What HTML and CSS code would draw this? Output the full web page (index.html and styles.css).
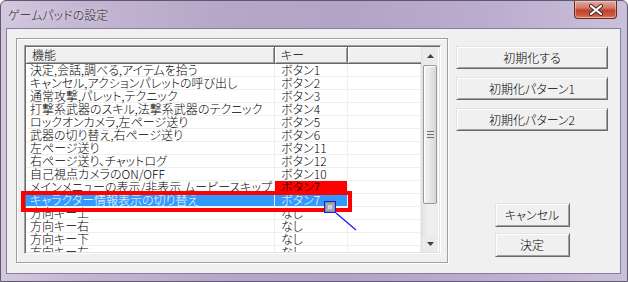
FILE: index.html
```html
<!DOCTYPE html>
<html lang="ja">
<head>
<meta charset="utf-8">
<title>ゲームパッドの設定</title>
<link rel="stylesheet" href="styles.css">
</head>
<body>
<div class="window">
  <div class="titlebar">
    <span class="title">ゲームパッドの設定</span>
    <div class="close">
      <svg width="16" height="12" viewBox="0 0 16 12"><path d="M3 2 L13 10 M13 2 L3 10" stroke="#3a2a2a" stroke-width="4" stroke-linecap="round"/><path d="M3 2 L13 10 M13 2 L3 10" stroke="#ffffff" stroke-width="2.2" stroke-linecap="round"/></svg>
    </div>
  </div>
  <div class="client">
    <div class="group">
      <div class="list">
        <div class="table">
          <div class="row head">
            <div class="hcell c1">機能</div>
            <div class="hcell c2">キー</div>
            <div class="hcell c3"></div>
          </div>
          <div class="row"><div class="cell c1">決定,会話,調べる,アイテムを拾う</div><div class="cell c2">ボタン1</div><div class="cell c3"></div></div>
          <div class="row"><div class="cell c1">キャンセル,アクションパレットの呼び出し</div><div class="cell c2">ボタン2</div><div class="cell c3"></div></div>
          <div class="row"><div class="cell c1">通常攻撃,パレット,テクニック</div><div class="cell c2">ボタン3</div><div class="cell c3"></div></div>
          <div class="row"><div class="cell c1">打撃系武器のスキル,法撃系武器のテクニック</div><div class="cell c2">ボタン4</div><div class="cell c3"></div></div>
          <div class="row"><div class="cell c1">ロックオンカメラ,左ページ送り</div><div class="cell c2">ボタン5</div><div class="cell c3"></div></div>
          <div class="row"><div class="cell c1">武器の切り替え,右ページ送り</div><div class="cell c2">ボタン6</div><div class="cell c3"></div></div>
          <div class="row"><div class="cell c1">左ページ送り</div><div class="cell c2">ボタン11</div><div class="cell c3"></div></div>
          <div class="row"><div class="cell c1">右ページ送り、チャットログ</div><div class="cell c2">ボタン12</div><div class="cell c3"></div></div>
          <div class="row"><div class="cell c1">自己視点カメラのON/OFF</div><div class="cell c2">ボタン10</div><div class="cell c3"></div></div>
          <div class="row"><div class="cell c1">メインメニューの表示/非表示,ムービースキップ</div><div class="cell c2 marked">ボタン7</div><div class="cell c3"></div></div>
          <div class="row selected"><div class="cell c1">キャラクター情報表示の切り替え</div><div class="cell c2">ボタン7</div><div class="cell c3"></div></div>
          <div class="row"><div class="cell c1">方向キー上</div><div class="cell c2">なし</div><div class="cell c3"></div></div>
          <div class="row"><div class="cell c1">方向キー右</div><div class="cell c2">なし</div><div class="cell c3"></div></div>
          <div class="row"><div class="cell c1">方向キー下</div><div class="cell c2">なし</div><div class="cell c3"></div></div>
          <div class="row"><div class="cell c1">方向キー左</div><div class="cell c2">なし</div><div class="cell c3"></div></div>
        </div>
        <div class="scrollbar">
          <div class="sbtn"><svg width="7" height="4" viewBox="0 0 7 4"><path d="M0 4 L3.5 0 L7 4 Z" fill="#404040"/></svg></div>
          <div class="track">
            <div class="thumb"><span class="grip"></span></div>
          </div>
          <div class="sbtn"><svg width="7" height="4" viewBox="0 0 7 4"><path d="M0 0 L3.5 4 L7 0 Z" fill="#404040"/></svg></div>
        </div>
      </div>
    </div>
    <div class="side">
      <button class="btn wide">初期化する</button>
      <button class="btn wide">初期化パターン1</button>
      <button class="btn wide">初期化パターン2</button>
      <div class="bottom">
        <button class="btn small">キャンセル</button>
        <button class="btn small">決定</button>
      </div>
    </div>
  </div>
  <div class="redbox"></div>
  <svg class="pointer" width="36" height="34" viewBox="0 0 36 34">
    <rect x="0.5" y="0.5" width="11" height="11" fill="#8e8e8e" stroke="#1a1aff"/>
    <rect x="2" y="2" width="8" height="8" fill="#a8a8a8"/>
    <rect x="4" y="4" width="4" height="4" fill="#b8e0e0"/>
    <line x1="12" y1="12" x2="32" y2="29" stroke="#1a1aff" stroke-width="1.3"/>
  </svg>
</div>
</body>
</html>
```
FILE: styles.css
```css
* { box-sizing: border-box; }
html, body { margin: 0; padding: 0; background: #ffffff; }
body {
  font-family: "Noto Sans CJK JP", "DejaVu Sans", sans-serif;
  font-size: 12px;
  font-weight: 300;
  font-feature-settings: "palt";
  color: #000;
}
.window {
  position: relative;
  width: 628px;
  height: 282px;
  border: 1px solid #5d5870;
  border-radius: 6px 6px 0 0;
  background: linear-gradient(to right, #d3c9de 0%, #c4b7d3 12%, #b6a7c8 35%, #b3a3c6 55%, #bcaed0 80%, #cbc0da 100%);
  padding: 0 6px 7px 5px;
  display: flex;
  flex-direction: column;
  overflow: hidden;
}
.titlebar {
  height: 27px;
  display: flex;
  justify-content: space-between;
  align-items: flex-start;
  flex-shrink: 0;
}
.title {
  padding: 7px 0 0 2px;
  line-height: 14px;
  font-size: 12px;
  color: #2b2b2b;
  text-shadow: 0 0 6px rgba(255,255,255,0.8);
}
.close {
  width: 43px;
  height: 18px;
  margin-right: 4px;
  border: 1px solid #6b2b22;
  border-top: none;
  border-radius: 0 0 4px 4px;
  background: linear-gradient(to bottom, #e8a899 0%, #d27a6a 40%, #c0412f 55%, #cc5a40 85%, #e08a6a 100%);
  display: flex;
  align-items: center;
  justify-content: center;
  box-shadow: inset 0 0 0 1px rgba(255,255,255,0.35);
}
.client {
  flex: 1;
  background: #f0f0f0;
  border: 1px solid #85809a;
  display: flex;
  padding: 9px 0 0 9px;
}
.group {
  width: 432px;
  height: 225px;
  border: 1px solid #a0a0a0;
  box-shadow: 1px 1px 0 #ffffff, inset 1px 1px 0 #ffffff;
  padding: 6px 0 0 7px;
}
.list {
  width: 417px;
  height: 209px;
  border-style: solid;
  border-width: 1px;
  border-color: #a0a0a0 #ffffff #ffffff #a0a0a0;
  box-shadow: inset 1px 1px 0 #696969, inset -1px -1px 0 #e3e3e3;
  padding: 1px;
  background: #ffffff;
  display: flex;
  overflow: hidden;
}
.table {
  width: 395px;
  overflow: hidden;
  flex-shrink: 0;
}
.row {
  display: grid;
  grid-template-columns: 249px 73px 73px;
  height: 13px;
  border-bottom: 1px solid #efefef;
}
.row.head {
  height: 17px;
  border-bottom: none;
}
.hcell {
  height: 17px;
  background: #f0f0f0;
  border-right: 1px solid #696969;
  border-bottom: 1px solid #696969;
  box-shadow: inset 1px 1px 0 #ffffff, inset -1px -1px 0 #a0a0a0;
  line-height: 16px;
  padding-left: 6px;
  white-space: nowrap;
}
.hcell.c3 { border-right: none; box-shadow: inset 1px 1px 0 #ffffff, inset 0 -1px 0 #a0a0a0; }
.cell {
  height: 12px;
  line-height: 12px;
  white-space: nowrap;
  overflow-x: clip;
  overflow-y: visible;
  border-right: 1px solid #efefef;
  padding-left: 6px;
}
.cell.c1 { padding-left: 4px; }
.cell.marked { background: #ff0000; }
.row.selected .c1, .row.selected .c2 {
  background: #3399ff;
  color: #ffffff;
}
.scrollbar {
  width: 17px;
  flex-shrink: 0;
  display: flex;
  flex-direction: column;
  background: #eaeaea;
  border-left: 1px solid #e0e0e0;
}
.sbtn {
  height: 17px;
  display: flex;
  align-items: center;
  justify-content: center;
  flex-shrink: 0;
}
.track {
  flex: 1;
  padding: 1px 0 0 0;
  background: linear-gradient(to right, #e3e3e3, #f0f0f0 40%, #ececec);
}
.thumb {
  height: 139px;
  margin: 0 1px;
  border: 1px solid #989898;
  border-radius: 2px;
  background: linear-gradient(to right, #f4f4f4 0%, #e8e8e8 45%, #d6d6d6 100%);
  box-shadow: inset 1px 1px 0 #ffffff;
  display: flex;
  align-items: center;
  justify-content: center;
}
.grip {
  width: 7px;
  height: 7px;
  background: repeating-linear-gradient(to bottom, #6f6f6f 0, #6f6f6f 1px, #e8e8e8 1px, #e8e8e8 3px);
}
.side {
  width: 152px;
  margin-left: 8px;
  padding: 8px 0 16px 0;
  display: flex;
  flex-direction: column;
}
.btn {
  font-family: inherit;
  font-size: 12px;
  font-weight: 300;
  font-feature-settings: "palt";
  color: #000;
  background: #f0f0f0;
  border-style: solid;
  border-width: 1px;
  border-color: #e3e3e3 #696969 #696969 #e3e3e3;
  box-shadow: inset 1px 1px 0 #ffffff, inset -1px -1px 0 #a0a0a0;
  padding: 0;
  line-height: 14px;
  display: flex;
  align-items: center;
  justify-content: center;
}
.btn.wide {
  width: 152px;
  height: 23px;
  margin-bottom: 8px;
}
.bottom {
  margin-top: auto;
  display: flex;
  flex-direction: column;
  align-items: center;
  gap: 6px;
}
.btn.small {
  width: 75px;
  height: 24px;
}
.redbox {
  position: absolute;
  left: 20px;
  top: 190px;
  width: 331px;
  height: 21px;
  border: 4px solid #ff0000;
}
.pointer {
  position: absolute;
  left: 323px;
  top: 200px;
}
```
